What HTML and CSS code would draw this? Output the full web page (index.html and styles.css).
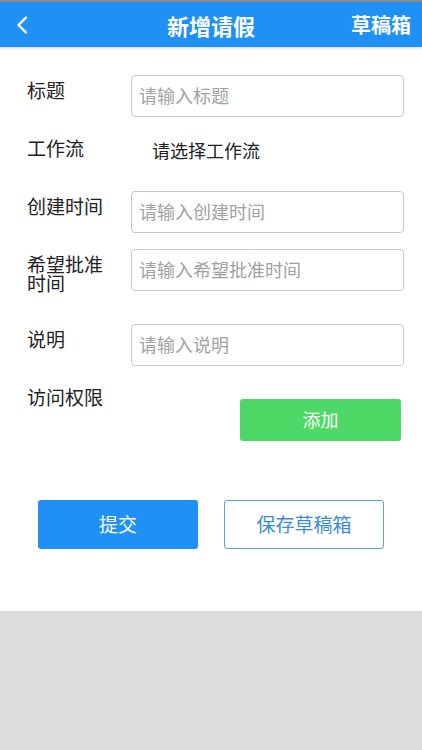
FILE: index.html
```html
<!DOCTYPE html>
<html lang="zh-CN">
<head>
    <meta charset="UTF-8">
    <meta name="viewport" content="width=device-width, initial-scale=1.0">
    <title>新增请假</title>
    <link rel="stylesheet" href="styles.css">
</head>
<body>
    <div class="status-strip"></div>
    <header class="topbar">
        <a class="back" href="#">
            <svg width="16" height="20" viewBox="0 0 16 20">
                <polyline points="11,2.5 3.5,10 11,17.5" fill="none" stroke="#fff" stroke-width="2.4" stroke-linecap="round" stroke-linejoin="round"/>
            </svg>
        </a>
        <h1 class="title">新增请假</h1>
        <a class="drafts" href="#">草稿箱</a>
    </header>

    <main class="page">
        <form class="leave-form">
            <div class="row">
                <label class="label" for="title">标题</label>
                <input class="field" id="title" type="text" placeholder="请输入标题">
            </div>
            <div class="row">
                <span class="label">工作流</span>
                <span class="picker">请选择工作流</span>
            </div>
            <div class="row">
                <label class="label" for="created">创建时间</label>
                <input class="field" id="created" type="text" placeholder="请输入创建时间">
            </div>
            <div class="row row-tall">
                <label class="label" for="expected">希望批准时间</label>
                <input class="field" id="expected" type="text" placeholder="请输入希望批准时间">
            </div>
            <div class="row">
                <label class="label" for="desc">说明</label>
                <input class="field" id="desc" type="text" placeholder="请输入说明">
            </div>
            <div class="row">
                <span class="label">访问权限</span>
                <button type="button" class="btn-add">添加</button>
            </div>

            <div class="actions">
                <button type="button" class="btn btn-submit">提交</button>
                <button type="button" class="btn btn-draft">保存草稿箱</button>
            </div>
        </form>
    </main>
</body>
</html>
```

FILE: styles.css
```css
body {
    margin: 0;
    background: #dddcdc;
    font-family: "Noto Sans CJK SC", "Noto Sans", sans-serif;
    color: #222;
}
.status-strip {
    height: 2px;
    background: #8c8c8c;
}
.topbar {
    height: 45px;
    background: #1f91f4;
    display: grid;
    grid-template-columns: 1fr auto 1fr;
    align-items: center;
    box-shadow: 0 1px 3px rgba(0, 0, 0, 0.18);
    position: relative;
}
.back {
    padding-left: 15px;
    display: flex;
    align-items: center;
}
.title {
    margin: 0;
    font-size: 22px;
    line-height: 26px;
    font-weight: bold;
    color: #fff;
}
.drafts {
    justify-self: end;
    padding-right: 11px;
    font-size: 20px;
    line-height: 24px;
    font-weight: bold;
    color: #fff;
    text-decoration: none;
}
.page {
    background: #fff;
    min-height: 564px;
    box-sizing: border-box;
    padding: 28px 18px 0 27px;
}
.row {
    display: flex;
    align-items: flex-start;
    min-height: 42px;
    margin-bottom: 16px;
}
.row-tall {
    min-height: 59px;
}
.label {
    width: 80px;
    flex: none;
    margin-right: 24px;
    padding-top: 5px;
    font-size: 19px;
    line-height: 19px;
    color: #222;
}
.field {
    flex: 1;
    height: 42px;
    box-sizing: border-box;
    border: 1px solid #c9c9c9;
    border-radius: 4px;
    padding: 0 7px 3px;
    font-family: inherit;
    font-size: 18px;
    color: #222;
    outline: none;
}
.field::placeholder {
    color: #a2a2a2;
}
.picker {
    padding-left: 21px;
    padding-top: 7px;
    font-size: 18px;
    line-height: 20px;
    color: #222;
}
.btn-add {
    margin: 17px 3px 0 auto;
    width: 161px;
    height: 42px;
    border: none;
    border-radius: 3px;
    background: #4ed866;
    color: #fff;
    font-family: inherit;
    font-size: 18px;
    padding-bottom: 3px;
}
.actions {
    display: flex;
    justify-content: center;
    gap: 26px;
    margin: 59px 9px 0 0;
}
.btn {
    width: 160px;
    height: 49px;
    box-sizing: border-box;
    border-radius: 3px;
    font-family: inherit;
    font-size: 19px;
    padding-bottom: 3px;
}
.btn-submit {
    border: none;
    background: #1e90f6;
    color: #fff;
}
.btn-draft {
    border: 1px solid #5ba2d9;
    background: #fff;
    color: #3a8dd4;
}
```
